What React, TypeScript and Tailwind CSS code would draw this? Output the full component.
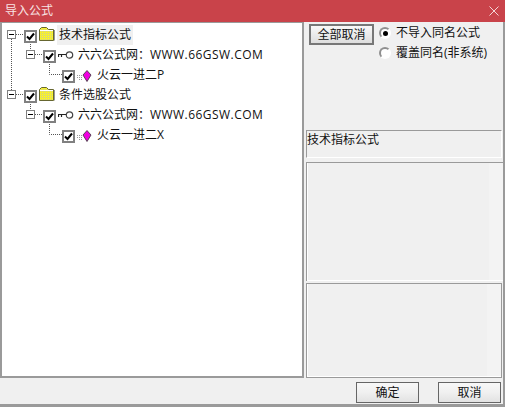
import type { ReactNode } from "react";

const font = "[font-family:'Open_Sans','Noto_Sans_CJK_SC',sans-serif]";

const CheckBox = () => (
  <div className="w-[13px] h-[13px] shrink-0 mt-[3px] border-2 border-[#808080] bg-white flex items-center justify-center">
    <svg width="9" height="9" viewBox="0 0 9 9">
      <path d="M1 4.5 L3.5 7 L8 1.5" fill="none" stroke="#000" strokeWidth="2" />
    </svg>
  </div>
);

const Expander = ({ x }: { x: number }) => (
  <g>
    <rect x={x + 0.5} y="5.5" width="8" height="8" fill="#fff" stroke="#808080" />
    <line x1={x + 2} y1="9.5" x2={x + 7} y2="9.5" stroke="#000" />
  </g>
);

const Dotted = ({ d }: { d: string }) => (
  <path d={d} fill="none" stroke="#555" strokeDasharray="1 1" />
);

const FolderIcon = () => (
  <svg width="16" height="14" viewBox="0 0 16 14" className="shrink-0 -mt-[3px]">
    <defs>
      <pattern id="dither" width="2" height="2" patternUnits="userSpaceOnUse">
        <rect width="2" height="2" fill="#f6f030" />
        <rect width="1" height="1" fill="#cfcf90" />
      </pattern>
    </defs>
    <path d="M0.5 13.5 V2.5 L2.5 0.5 H7.5 L9.5 2.5 H14.5 V13.5 Z" fill="url(#dither)" stroke="#666630" />
    <path d="M1 3.5 H14" stroke="#fff" />
    <path d="M15.5 3 V13.5" stroke="#999" />
  </svg>
);

const KeyIcon = () => (
  <svg width="16" height="10" viewBox="0 0 16 10" className="shrink-0">
    <circle cx="11.5" cy="5" r="3.2" fill="#fff" stroke="#444" strokeWidth="1.2" />
    <path d="M8 4.5 H0.5 V7 M3.5 4.5 V7" fill="none" stroke="#222" strokeWidth="1.2" />
  </svg>
);

const GemIcon = () => (
  <svg width="15" height="12" viewBox="0 0 15 12" className="shrink-0 mt-[1px]">
    <path d="M0 5.5 H5 M0 7.5 H5 M2 9.5 H6" stroke="#999" strokeDasharray="1 1" />
    <path d="M10 0.5 L14 5 L10 11.5 L6 5 Z" fill="#f000e0" stroke="#333" strokeWidth="0.8" />
  </svg>
);

const TreeRow = ({ indent, lines, icon, label, latin, gap, active }: {
  indent: number;
  lines: ReactNode;
  icon: ReactNode;
  label: string;
  latin?: string;
  gap: string;
  active?: boolean;
}) => (
  <div className="flex items-center h-5">
    <svg width={indent} height="20" viewBox={`0 0 ${indent} 20`} className="shrink-0 overflow-visible">
      {lines}
    </svg>
    <CheckBox />
    <div className="ml-0.5 flex items-center">{icon}</div>
    <span className={`${gap} px-0.5 leading-5 text-[12px] text-[#111] whitespace-nowrap ${active ? "bg-[#f0f0f0]" : ""}`}>
      {label}
      {latin && <span className="tracking-[0.45px]">{latin}</span>}
    </span>
  </div>
);

const Radio = ({ on, label }: { on?: boolean; label: string }) => (
  <div className="flex items-center h-5">
    <div className="w-3 h-3 rounded-full border-2 border-[#8f8f8f] border-r-white border-b-white bg-white flex items-center justify-center">
      {on && <div className="w-[5px] h-[5px] rounded-full bg-black" />}
    </div>
    <span className="ml-[5px] text-[12px] text-[#111] whitespace-nowrap">{label}</span>
  </div>
);

const DialogButton = ({ label, className }: { label: string; className: string }) => (
  <button className={`${className} h-[21px] border border-[#666] bg-gradient-to-b from-[#f8f8f8] via-[#f0f0f0] to-[#e2e2e2] text-[12px] text-[#111] flex items-center justify-center`}>
    {label}
  </button>
);

export default function App() {
  return (
    <div className={`w-[505px] h-[407px] bg-[#f0f0f0] flex flex-col overflow-hidden ${font}`}>
      <div className="h-[22px] shrink-0 bg-[#c9434a] flex items-center justify-between pl-[5px] pr-[6px]">
        <span className="text-[12px] text-[#f8e4e4]">导入公式</span>
        <svg width="10" height="10" viewBox="0 0 10 10">
          <path d="M0.5 0.5 L9.5 9.5 M9.5 0.5 L0.5 9.5" stroke="#f3d6d6" strokeWidth="1" />
        </svg>
      </div>

      <div className="flex-1 flex flex-col border-r-2 border-[#9a9a9a]">
        <div className="h-[356px] shrink-0 flex">
          <div className="w-[304px] shrink-0 bg-white border-l-2 border-t border-r-2 border-b-2 border-[#9a9a9a] pt-[2px]">
            <TreeRow
              indent={22}
              lines={<><Expander x={5} /><Dotted d="M14 9.5 H22 M9.5 14 V20" /></>}
              icon={<FolderIcon />}
              label="技术指标公式"
              gap="ml-[2px]"
              active
            />
            <TreeRow
              indent={41}
              lines={<><Dotted d="M9.5 0 V20 M28.5 -1 V5 M33 9.5 H41" /><Expander x={24} /></>}
              icon={<KeyIcon />}
              label="六六公式网："
              latin="WWW.66GSW.COM"
              gap="ml-[2px]"
            />
            <TreeRow
              indent={60}
              lines={<Dotted d="M9.5 0 V20 M47.5 -1 V9.5 H60" />}
              icon={<GemIcon />}
              label="火云一进二P"
              gap="ml-[3px]"
            />
            <TreeRow
              indent={22}
              lines={<><Dotted d="M9.5 0 V5" /><Expander x={5} /><Dotted d="M14 9.5 H22" /></>}
              icon={<FolderIcon />}
              label="条件选股公式"
              gap="ml-[2px]"
            />
            <TreeRow
              indent={41}
              lines={<><Dotted d="M28.5 -1 V5 M33 9.5 H41" /><Expander x={24} /></>}
              icon={<KeyIcon />}
              label="六六公式网："
              latin="WWW.66GSW.COM"
              gap="ml-[2px]"
            />
            <TreeRow
              indent={60}
              lines={<Dotted d="M47.5 -1 V9.5 H60" />}
              icon={<GemIcon />}
              label="火云一进二X"
              gap="ml-[3px]"
            />
          </div>

          <div className="flex-1 flex flex-col">
            <div className="h-[108px] shrink-0 flex pt-[2px] pl-[5px]">
              <button className="w-[65px] h-[21px] border-2 border-[#777] bg-gradient-to-b from-[#f8f8f8] to-[#dedede] text-[12px] text-[#111] flex items-center justify-center">
                全部取消
              </button>
              <div className="ml-[5px] -mt-[1px]">
                <Radio on label="不导入同名公式" />
                <Radio label="覆盖同名(非系统)" />
              </div>
            </div>
            <div className="h-[28px] shrink-0 ml-0.5 mr-[1px] border-t border-l border-[#9a9a9a] border-r border-r-white border-b border-b-white text-[12px] leading-[18px] text-[#111] whitespace-nowrap">
              技术指标公式
            </div>
            <div className="h-[119px] shrink-0 mt-1 ml-0.5 border-t border-l border-[#9a9a9a] flex">
              <div className="flex-1 border-l border-b border-white" />
              <div className="w-3.5 border-b border-white bg-[#f3f3f3]" />
            </div>
            <div className="h-[95px] shrink-0 mt-[2px] ml-0.5 mr-[1px] border border-[#9a9a9a] flex">
              <div className="flex-1 border-l border-b border-white" />
              <div className="w-3.5 border-b border-white bg-[#f3f3f3]" />
            </div>
          </div>
        </div>

        <div className="flex-1 flex justify-end items-start pt-[4px] pr-0.5">
          <DialogButton label="确定" className="w-[63px]" />
          <DialogButton label="取消" className="w-[63px] ml-[19px]" />
        </div>
      </div>
      <div className="h-[3px] shrink-0 bg-[#9a9a9a]" />
    </div>
  );
}
